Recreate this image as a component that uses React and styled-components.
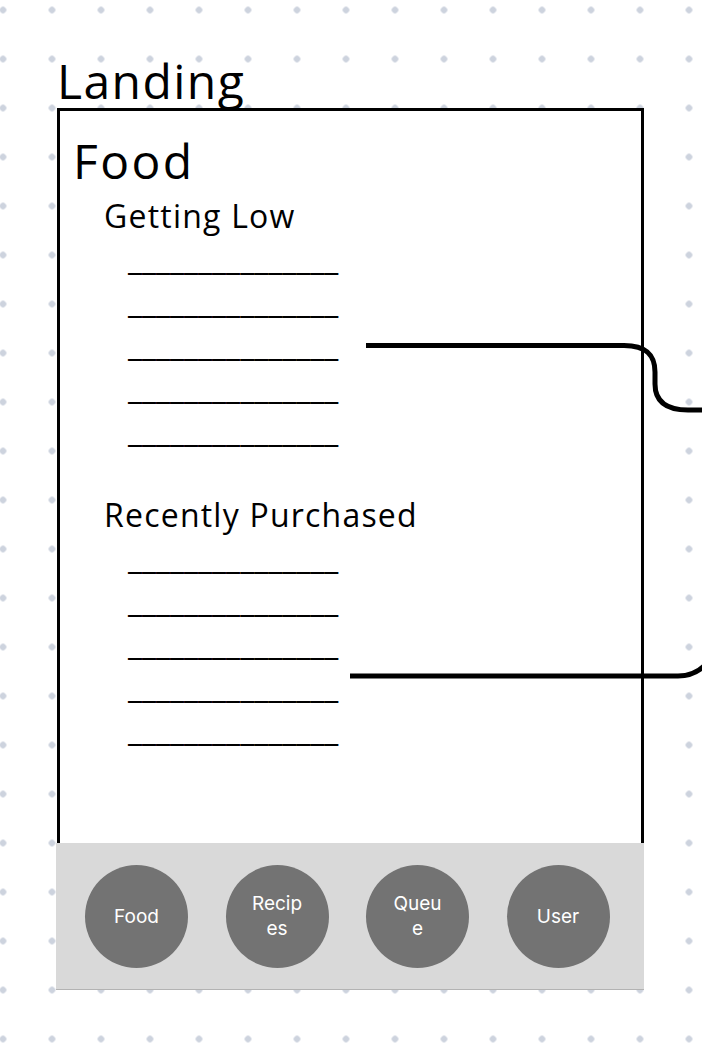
import React from 'react';
import styled, { createGlobalStyle } from 'styled-components';

const GlobalStyle = createGlobalStyle`
  html, body {
    margin: 0;
    min-height: 100%;
  }
  body {
    min-height: 1047px;
    background-color: #ffffff;
    background-image: radial-gradient(circle, #cdd3de 3px, transparent 3.6px);
    background-size: 49px 49px;
    background-position: -21.5px -14.5px;
    font-family: "Open Sans", "Noto Sans", sans-serif;
    color: #000;
  }
`;

const Page = styled.div`
  position: relative;
  padding: 57px 0 0 57px;
`;

const PageLabel = styled.div`
  font-size: 48px;
  line-height: 48px;
  letter-spacing: 0.03em;
  margin: 0 0 3px 0;
`;

const Frame = styled.div`
  box-sizing: border-box;
  width: 587px;
  height: 882px;
  border: 3px solid #000;
  background: #fff;
  display: flex;
  flex-direction: column;
  padding: 22px 0 0 13px;
`;

const FrameTitle = styled.div`
  font-size: 48px;
  line-height: 56px;
  letter-spacing: 0.05em;
`;

const Section = styled.section`
  margin-top: ${p => p.$gap}px;
  padding-left: 31px;
`;

const SectionTitle = styled.div`
  font-size: 32px;
  line-height: 40px;
  letter-spacing: 0.038em;
`;

const Blank = styled.div`
  font-size: 32px;
  line-height: 43px;
  padding-left: 24px;
  white-space: nowrap;
`;

const NavBar = styled.nav`
  margin: auto -3px -3px -17px;
  height: 146px;
  background: #d9d9d9;
  border-bottom: 1px solid #b3b3b3;
  display: flex;
  align-items: center;
  gap: 37.5px;
  padding-left: 29px;
`;

const NavButton = styled.button`
  flex: none;
  width: 103px;
  height: 103px;
  border: none;
  border-radius: 50%;
  background: #737373;
  display: flex;
  align-items: center;
  justify-content: center;
  padding: 0;
  cursor: pointer;

  & > span {
    max-width: 56px;
    word-break: break-all;
    text-align: center;
    font-family: Inter, "Noto Sans", sans-serif;
    font-size: 19px;
    line-height: 25px;
    color: #fff;
  }
`;

const Wires = styled.svg`
  position: absolute;
  top: 0;
  left: 0;
  pointer-events: none;
`;

const lists = [
  { title: 'Getting Low', gap: 7 },
  { title: 'Recently Purchased', gap: 44 },
];

const tabs = ['Food', 'Recipes', 'Queue', 'User'];

const App = () => (
  <>
    <GlobalStyle />
    <Page>
      <PageLabel>Landing</PageLabel>
      <Frame>
        <FrameTitle>Food</FrameTitle>
        {lists.map(list => (
          <Section key={list.title} $gap={list.gap}>
            <SectionTitle>{list.title}</SectionTitle>
            {[0, 1, 2, 3, 4].map(i => (
              <Blank key={i}>_______________</Blank>
            ))}
          </Section>
        ))}
        <NavBar>
          {tabs.map(tab => (
            <NavButton key={tab}>
              <span>{tab}</span>
            </NavButton>
          ))}
        </NavBar>
      </Frame>
      <Wires width="702" height="1047" viewBox="0 0 702 1047">
        <path
          d="M366 345.5 H624 C647 345.5 655 356 655 372 V384 C655 400 664 410 688 410 H710"
          fill="none"
          stroke="#000"
          strokeWidth="5"
        />
        <path
          d="M350 676 H678 C690 676 699 672 706 664"
          fill="none"
          stroke="#000"
          strokeWidth="5"
        />
      </Wires>
    </Page>
  </>
);

export default App;
